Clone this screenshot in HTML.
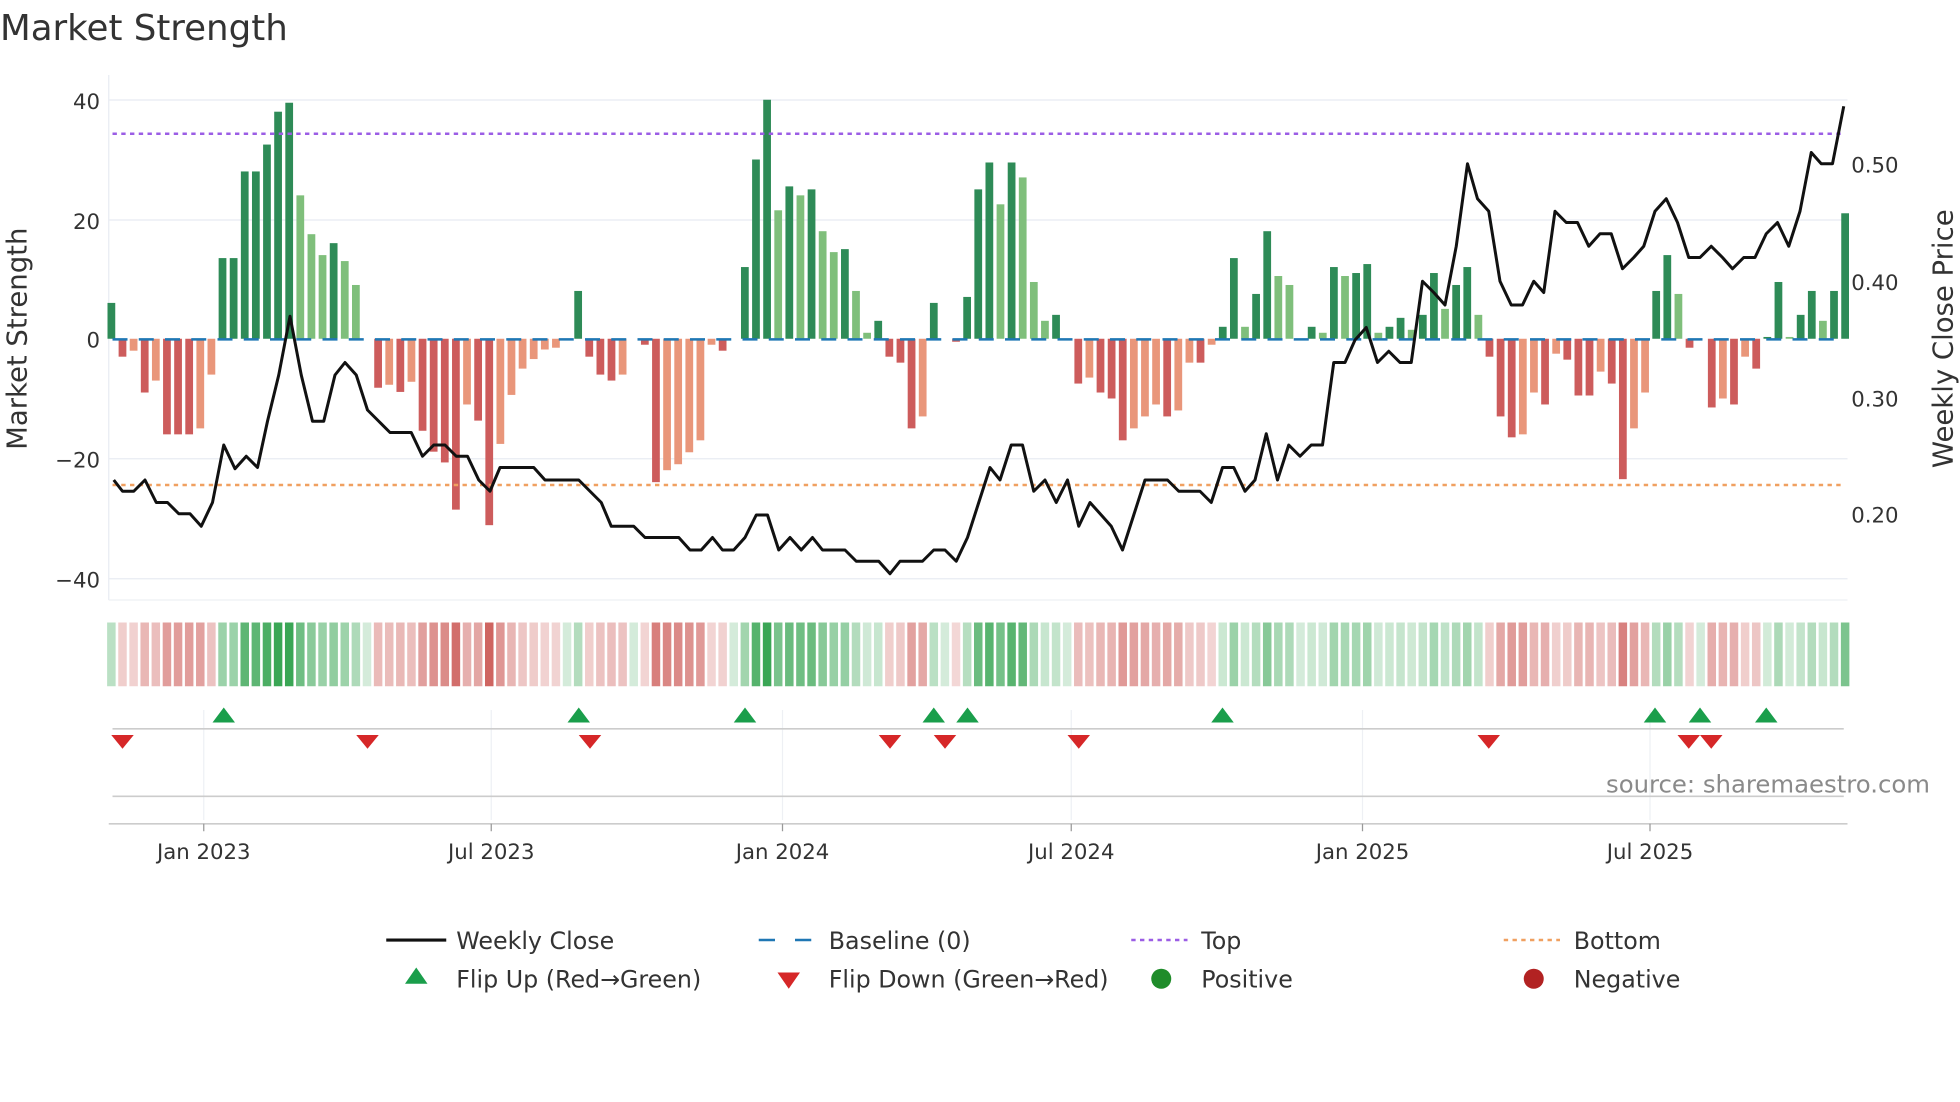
<!DOCTYPE html>
<html><head><meta charset="utf-8"><style>
html,body{margin:0;padding:0;background:#fff;width:1960px;height:1102px;overflow:hidden}
svg{display:block}
text{font-family:"DejaVu Sans","Liberation Sans",sans-serif;fill:#333}
</style></head><body>
<svg id="s" width="1960" height="1102" viewBox="0 0 1568 881.6" xmlns="http://www.w3.org/2000/svg">
<text x="0" y="32" font-size="28.5" fill="#333">Market Strength</text>
<g id="grid" stroke="#e8ebf2" stroke-width="1">
<line x1="87" x2="1478" y1="80" y2="80"/><line x1="87" x2="1478" y1="176" y2="176"/>
<line x1="87" x2="1478" y1="367" y2="367"/><line x1="87" x2="1478" y1="463" y2="463"/>
<line x1="87" x2="87" y1="60" y2="480"/>
</g>
<line x1="87" x2="1478" y1="480" y2="480" stroke="#eef0f4"/>
<g id="bars"></g>
<line x1="90" x2="1476" y1="271.5" y2="271.5" stroke="#1f77b4" stroke-width="2" stroke-dasharray="12,9"/>
<line x1="90" x2="1476" y1="107" y2="107" stroke="#9b5de5" stroke-width="2" stroke-dasharray="3.5,3.5"/>
<line x1="90" x2="1476" y1="388" y2="388" stroke="#f0a060" stroke-width="2" stroke-dasharray="3.5,3.5"/>
<polyline id="line" fill="none" stroke="#111" stroke-width="2.4" stroke-linejoin="round"/>
<g font-size="17" text-anchor="end">
<text x="80" y="87">40</text><text x="80" y="183">20</text><text x="80" y="278">0</text>
<text x="80" y="374">−20</text><text x="80" y="470">−40</text>
</g>
<g font-size="17">
<text x="1481" y="138">0.50</text><text x="1481" y="232">0.40</text>
<text x="1481" y="325">0.30</text><text x="1481" y="418">0.20</text>
</g>
<text transform="translate(21,271) rotate(-90)" font-size="22" text-anchor="middle">Market Strength</text>
<text transform="translate(1562,271) rotate(-90)" font-size="22" text-anchor="middle">Weekly Close Price</text>
<g id="heat"></g>
<g stroke="#eef0f4" stroke-width="1">
<line x1="163" x2="163" y1="568" y2="656"/><line x1="393" x2="393" y1="568" y2="656"/>
<line x1="626" x2="626" y1="568" y2="656"/><line x1="857" x2="857" y1="568" y2="656"/>
<line x1="1090" x2="1090" y1="568" y2="656"/><line x1="1320" x2="1320" y1="568" y2="656"/>
</g>
<line x1="90" x2="1475" y1="583" y2="583" stroke="#ccc" stroke-width="1.3"/>
<line x1="90" x2="1475" y1="637" y2="637" stroke="#ccc" stroke-width="1.3"/>
<line x1="87" x2="1478" y1="659" y2="659" stroke="#ccc" stroke-width="1.3"/>
<g id="marks"></g>
<text x="1544" y="634" font-size="19.5" text-anchor="end" style="fill:#8a8a8a">source: sharemaestro.com</text>
<g stroke="#999" stroke-width="1"><line x1="163" x2="163" y1="659" y2="665"/><line x1="393" x2="393" y1="659" y2="665"/><line x1="626" x2="626" y1="659" y2="665"/><line x1="857" x2="857" y1="659" y2="665"/><line x1="1090" x2="1090" y1="659" y2="665"/><line x1="1320" x2="1320" y1="659" y2="665"/></g>
<g font-size="17" text-anchor="middle">
<text x="163" y="687">Jan 2023</text><text x="393" y="687">Jul 2023</text><text x="626" y="687">Jan 2024</text>
<text x="857" y="687">Jul 2024</text><text x="1090" y="687">Jan 2025</text><text x="1320" y="687">Jul 2025</text>
</g>
<g font-size="19">
<line x1="309" x2="357" y1="752" y2="752" stroke="#111" stroke-width="2.5"/>
<text x="365" y="759">Weekly Close</text>
<line x1="607" x2="620" y1="752" y2="752" stroke="#1f77b4" stroke-width="2"/><line x1="636" x2="649" y1="752" y2="752" stroke="#1f77b4" stroke-width="2"/>
<text x="663" y="759">Baseline (0)</text>
<line x1="905" x2="950" y1="752" y2="752" stroke="#9b5de5" stroke-width="2" stroke-dasharray="3.5,3.5"/>
<text x="961" y="759">Top</text>
<line x1="1203" x2="1248" y1="752" y2="752" stroke="#f0a060" stroke-width="2" stroke-dasharray="3.5,3.5"/>
<text x="1259" y="759">Bottom</text>
<polygon points="333,774 324,787 342,787" fill="#1a9e4b"/>
<text x="365" y="790">Flip Up (Red→Green)</text>
<polygon points="622,778 640,778 631,791" fill="#d62728"/>
<text x="663" y="790">Flip Down (Green→Red)</text>
<circle cx="929" cy="783" r="8" fill="#1f8c2a"/>
<text x="961" y="790">Positive</text>
<circle cx="1227" cy="783" r="8" fill="#b22222"/>
<text x="1259" y="790">Negative</text>
</g>
</svg>
<script>
var v=[6,-3,-2,-9,-7,-16,-16,-16,-15,-6,13.5,13.5,28,28,32.5,38,39.5,24,17.5,14,16,13,9,0,
-8.2,-7.7,-8.9,-7.2,-15.4,-18.9,-20.7,-28.6,-11,-13.7,-31.2,-17.6,-9.4,-5,-3.4,-1.8,-1.5,0,8,
-3,-6,-7,-6,0,-1,-24,-22,-21,-19,-17,-1,-2,0,12,30,40,21.5,25.5,24,25,18,14.5,15,8,1,3,
-3,-4,-15,-13,6,0,-0.5,7,25,29.5,22.5,29.5,27,9.5,3,4,0,-7.5,-6.5,-9,-10,-17,-15,-13,-11,-13,-12,-4,-4,-1,
2,13.5,2,7.5,18,10.5,9,0,2,1,12,10.5,11,12.5,1,2,3.5,1.5,4,11,5,9,12,4,
-3,-13,-16.5,-16,-9,-11,-2.5,-3.5,-9.5,-9.5,-5.5,-7.5,-23.5,-15,-9,8,14,7.5,-1.5,0,-11.5,-10,-11,-3,-5,0.3,9.5,0.3,4,8,3,8,21];
var N=v.length,x0=89,dx=(1476-89)/(N-1),ns="http://www.w3.org/2000/svg";
function el(t,a,p){var e=document.createElementNS(ns,t);for(var k in a)e.setAttribute(k,a[k]);document.getElementById(p).appendChild(e);}
for(var i=0;i<N;i++){var x=x0+dx*i,val=v[i],prev=i?v[i-1]:0,c;
 if(val>=0)c=(val>=prev)?"#2e8b57":"#7fbf7b";else c=(val<=prev)?"#cd5c5c":"#e9967a";
 var y=271-val*4.78;
 if(Math.abs(val)>0.05)el("rect",{x:x-3,y:Math.min(y,271),width:6.2,height:Math.abs(val)*4.78,fill:c},"bars");
 var a=Math.min(1,0.22+Math.abs(val)/40*0.85);
 el("rect",{x:x-3.3,y:498,width:6.8,height:51,fill:val>=0?"#3aa655":"#c9504c","fill-opacity":a},"heat");}
var P=[[91,384],[98,393],[107,393],[116,384],[125,402],[134,402],[143,411],[152,411],[161,421],[170,402],[179,356],[188,375],[197,365],[206,374],[214,337],[223,300],[232,253],[241,300],[250,337],[259,337],[268,300],[276,290],[285,300],[294,328],[303,337],[312,346],[320,346],[329,346],[338,365],[347,356],[356,356],[365,365],[374,365],[383,384],[392,393],[400,374],[409,374],[418,374],[427,374],[436,384],[445,384],[454,384],[463,384],[472,393],[481,402],[489,421],[498,421],[507,421],[516,430],[525,430],[534,430],[543,430],[552,440],[561,440],[570,430],[578,440],[587,440],[596,430],[605,412],[614,412],[623,440],[632,430],[641,440],[650,430],[658,440],[667,440],[676,440],[685,449],[694,449],[703,449],[712,459],[720,449],[729,449],[738,449],[747,440],[756,440],[765,449],[774,430],[783,402],[792,374],[800,384],[809,356],[818,356],[827,393],[836,384],[845,402],[854,384],[863,421],[872,402],[881,412],[889,421],[898,440],[907,412],[916,384],[925,384],[934,384],[943,393],[952,393],[960,393],[969,402],[978,374],[987,374],[996,393],[1004,384],[1013,347],[1022,384],[1031,356],[1040,365],[1049,356],[1058,356],[1067,290],[1076,290],[1084,272],[1093,262],[1102,290],[1111,281],[1120,290],[1129,290],[1138,225],[1147,234],[1156,244],[1165,197],[1174,131],[1182,159],[1191,169],[1200,225],[1209,244],[1218,244],[1227,225],[1235,234],[1244,169],[1253,178],[1262,178],[1271,197],[1280,187],[1289,187],[1298,215],[1307,206],[1315,197],[1324,169],[1333,159],[1342,178],[1351,206],[1360,206],[1369,197],[1378,206],[1386,215],[1395,206],[1404,206],[1413,187],[1422,178],[1431,197],[1440,169],[1449,122],[1457,131],[1466,131],[1475,85]];
document.getElementById("line").setAttribute("points",P.map(function(p){return p.join(",")}).join(" "));
[179,463,596,747,774,978,1324,1360,1413].forEach(function(x){el("polygon",{points:(x)+",566 "+(x-9)+",578 "+(x+9)+",578",fill:"#1a9e4b"},"marks")});
[98,294,472,712,756,863,1191,1351,1369].forEach(function(x){el("polygon",{points:(x-9)+",588 "+(x+9)+",588 "+x+",599",fill:"#d62728"},"marks")});
</script>
</body></html>
